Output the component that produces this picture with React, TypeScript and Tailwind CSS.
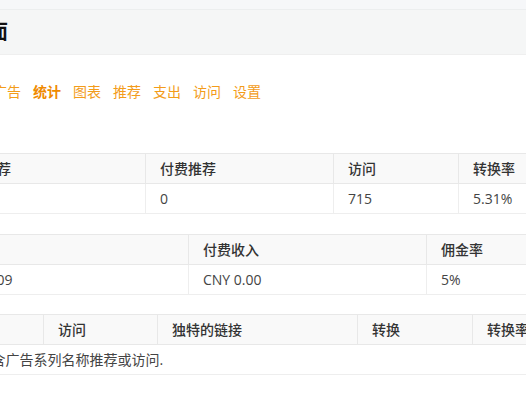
import React from 'react';

const tabs = ['概况', '链接', '广告', '统计', '图表', '推荐', '支出', '访问', '设置'];

interface StatTableProps {
  widths: string[];
  headers: string[];
  rows?: string[][];
  note?: string;
}

const StatTable: React.FC<StatTableProps> = ({ widths, headers, rows, note }) => (
  <table className="w-full table-fixed border-collapse">
    <colgroup>
      {widths.map((w, i) => (
        <col key={i} className={w} />
      ))}
    </colgroup>
    <thead>
      <tr className="bg-[#f9f9f9]">
        {headers.map((h, i) => (
          <th
            key={i}
            className="h-[30px] border border-[#e8e8e8] pl-[14px] text-left font-medium text-[#333]"
          >
            {h}
          </th>
        ))}
      </tr>
    </thead>
    <tbody>
      {rows &&
        rows.map((r, ri) => (
          <tr key={ri}>
            {r.map((c, ci) => (
              <td key={ci} className="h-[30px] border border-[#eeeeee] pl-[14px] text-[#444]">
                {c}
              </td>
            ))}
          </tr>
        ))}
      {note && (
        <tr>
          <td colSpan={headers.length} className="h-[30px] border-b border-[#eeeeee] pl-[9px] text-[#444]">
            {note}
          </td>
        </tr>
      )}
    </tbody>
  </table>
);

export default function App() {
  return (
    <div className="relative h-[394px] w-[526px] overflow-hidden bg-white font-['Open_Sans','Noto_Sans_CJK_SC',sans-serif] text-[14px]">
      <div className="-ml-[200px] w-[800px]">
        {/* top strip */}
        <div className="h-[10px] border-b border-[#eceeef] bg-[#f6f7f9]" />

        {/* page header */}
        <div className="flex h-[45px] items-center border-b border-[#efefef] bg-[#f5f6f6] pl-[128px]">
          <h1 className="text-[20px] font-bold leading-none text-[#111]">推广界面</h1>
        </div>

        {/* tabs */}
        <nav className="mt-[27px] flex gap-[12px] pl-[113px] leading-[20px]">
          {tabs.map((t) => (
            <a
              key={t}
              className={t === '统计' ? 'font-bold text-[#ef8a00]' : 'text-[#f39c1a]'}
            >
              {t}
            </a>
          ))}
        </nav>

        <div className="mt-[51px] flex flex-col">
          <StatTable
            widths={['w-[168px]', 'w-[177px]', 'w-[188px]', 'w-[125px]', 'w-[142px]']}
            headers={['点击', '推荐', '付费推荐', '访问', '转换率']}
            rows={[['715', '38', '0', '715', '5.31%']]}
          />
          <div className="h-[20px]" />
          <StatTable
            widths={['w-[131px]', 'w-[257px]', 'w-[238px]', 'w-[174px]']}
            headers={['佣金', '收入', '付费收入', '佣金率']}
            rows={[['CNY 2.35', 'CNY 47.09', 'CNY 0.00', '5%']]}
          />
          <div className="h-[19px]" />
          <StatTable
            widths={['w-[243px]', 'w-[114px]', 'w-[200px]', 'w-[115px]', 'w-[128px]']}
            headers={['广告系列', '访问', '独特的链接', '转换', '转换率']}
            note="在所选的时间段内没有找到包含广告系列名称推荐或访问."
          />
        </div>
      </div>
    </div>
  );
}
